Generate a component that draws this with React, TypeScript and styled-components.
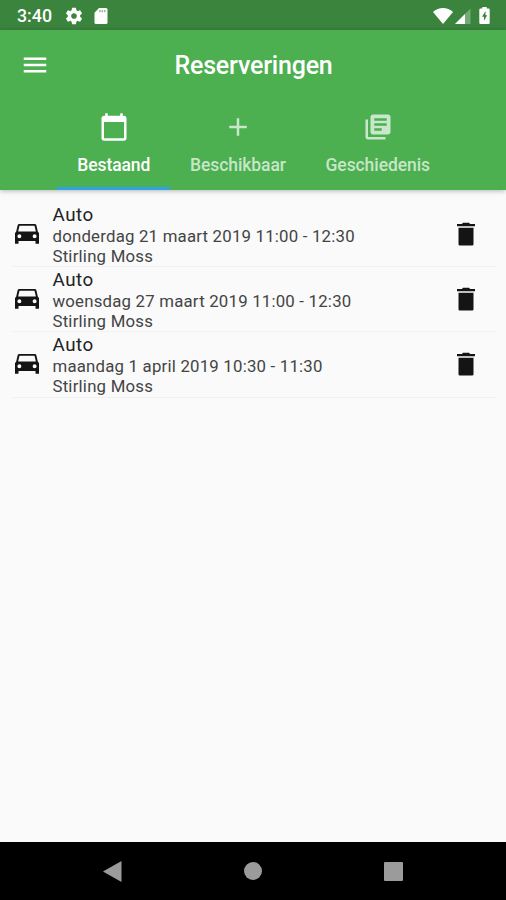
import React from "react";
import styled, { createGlobalStyle } from "styled-components";

const GlobalStyle = createGlobalStyle`
  * { box-sizing: border-box; }
  body { margin: 0; background: #fafafa; font-family: Roboto, "Liberation Sans", sans-serif; }
`;

const Screen = styled.div`
  width: 506px;
  height: 900px;
  display: flex;
  flex-direction: column;
  background: #fafafa;
  overflow: hidden;
`;

const StatusBar = styled.div`
  height: 30px;
  flex: none;
  display: flex;
  align-items: center;
  padding: 1px 16px 0 17px;
  background: #3b843e;
  color: #fff;
`;

const Clock = styled.span`
  width: 48px;
  font-size: 17.8px;
  font-weight: 500;
  line-height: 30px;
`;

const StatusGroup = styled.div<{ $gap: number; $end?: boolean }>`
  display: flex;
  align-items: center;
  gap: ${(p) => p.$gap}px;
  margin-left: ${(p) => (p.$end ? "auto" : "0")};
`;

const Header = styled.header`
  flex: none;
  height: 160px;
  background: #4caf50;
  color: #fff;
  box-shadow: 0 1px 5px rgba(0, 0, 0, 0.28);
`;

const AppBar = styled.div`
  height: 70px;
  display: grid;
  grid-template-columns: 70px 1fr 70px;
  align-items: center;
  justify-items: center;
`;

const Title = styled.h1`
  margin: 0;
  padding: 2px 0 0 1px;
  font-size: 25px;
  font-weight: 500;
  line-height: 30px;
  letter-spacing: -0.2px;
`;

const Tabs = styled.nav`
  height: 90px;
  display: flex;
  justify-content: center;
  padding-left: 1px;
`;

const Tab = styled.div<{ $width: number; $active?: boolean }>`
  width: ${(p) => p.$width}px;
  display: flex;
  flex-direction: column;
  align-items: center;
  padding-top: 12px;
  color: ${(p) => (p.$active ? "#fff" : "rgba(255, 255, 255, 0.7)")};
  border-bottom: 3px solid ${(p) => (p.$active ? "#2fa3e6" : "transparent")};
`;

const TabLabel = styled.span`
  margin-top: 13px;
  font-size: 17.5px;
  font-weight: 500;
  line-height: 21px;
  letter-spacing: -0.08px;
`;

const List = styled.main`
  flex: 1;
  padding: 12px 10px 0 12px;
`;

const Row = styled.article`
  height: 65.2px;
  display: grid;
  grid-template-columns: 40px 1fr 60px;
  align-items: center;
  border-bottom: 1px solid #f2f2f2;
  color: #141414;
`;

const RowText = styled.div`
  display: flex;
  flex-direction: column;
  white-space: nowrap;
  padding: 2px 0 0 0.5px;
`;

const Kind = styled.span`
  font-size: 18.8px;
  line-height: 22px;
  letter-spacing: 0.5px;
  color: #222;
`;

const Detail = styled.span`
  font-size: 16.8px;
  line-height: 20px;
  letter-spacing: 0.21px;
  color: #444;
`;

const RowIcon = styled.div<{ $end?: boolean }>`
  justify-self: ${(p) => (p.$end ? "end" : "start")};
  padding: ${(p) => (p.$end ? "0 15px 1px 0" : "0 0 2px 0")};
`;

const Navigation = styled.footer`
  flex: none;
  height: 58px;
  display: grid;
  grid-template-columns: repeat(3, 140.5px);
  justify-content: center;
  align-items: center;
  justify-items: center;
  background: #000;
  color: #9b9b9b;
`;

const Glyph = styled.svg`
  display: block;
  flex: none;
  fill: currentColor;
`;

type IconProps = { d: string; w?: number; h?: number; box?: string };

const Icon = ({ d, w = 30, h = 30, box = "0 0 24 24" }: IconProps) => (
  <Glyph width={w} height={h} viewBox={box} aria-hidden="true">
    <path d={d} fillRule="evenodd" />
  </Glyph>
);

const paths = {
  menu: "M3 18h18v-2H3v2zm0-5h18v-2H3v2zm0-7v2h18V6H3z",
  calendar:
    "M20 3h-1V1h-2v2H7V1H5v2H4c-1.1 0-2 .9-2 2v16c0 1.1.9 2 2 2h16c1.1 0 2-.9 2-2V5c0-1.1-.9-2-2-2zm0 18H4V8h16v13z",
  add: "M19 13h-6v6h-2v-6H5v-2h6V5h2v6h6v2z",
  books:
    "M4 6H2v14c0 1.1.9 2 2 2h14v-2H4V6zm16-4H8c-1.1 0-2 .9-2 2v12c0 1.1.9 2 2 2h12c1.1 0 2-.9 2-2V4c0-1.1-.9-2-2-2zm-1 9H9V9h10v2zm-4 4H9v-2h6v2zm4-8H9V5h10v2z",
  car: "M5.8 4.8H18.2q1 0 1.3 1L20.700 11l.9.900V20.600h-2.800V18.400H5.200v2.200H2.400V11.900l.9-.9L4.500 5.800q.3-1 1.300-1zM6 6.200L4.900 10.800h14.200L18 6.200zM5.900 12.900a1.600 1.600 0 1 0 0 3.200 1.600 1.600 0 1 0 0-3.200zM18.100 12.900a1.600 1.600 0 1 0 0 3.200 1.600 1.600 0 1 0 0-3.200z",
  trash: "M6 7h12v13.2q0 1-1 1H7q-1 0-1-1zM4.8 4h4l.7-1h5l.7 1h4v1.800H4.800z",
  gear: "M19.43 12.98c.04-.32.07-.64.07-.98s-.03-.66-.07-.98l2.11-1.65c.19-.15.24-.42.12-.64l-2-3.46c-.12-.22-.39-.3-.61-.22l-2.49 1c-.52-.4-1.08-.73-1.69-.98l-.38-2.65C14.46 2.18 14.25 2 14 2h-4c-.25 0-.46.18-.49.42l-.38 2.65c-.61.25-1.17.59-1.69.98l-2.49-1c-.23-.09-.49 0-.61.22l-2 3.46c-.13.22-.07.49.12.64l2.11 1.65c-.04.32-.07.65-.07.98s.03.66.07.98l-2.11 1.65c-.19.15-.24.42-.12.64l2 3.46c.12.22.39.3.61.22l2.49-1c.52.4 1.08.73 1.69.98l.38 2.65c.03.24.24.42.49.42h4c.25 0 .46-.18.49-.42l.38-2.65c.61-.25 1.17-.59 1.69-.98l2.49 1c.23.09.49 0 .61-.22l2-3.46c.12-.22.07-.49-.12-.64l-2.11-1.65zM12 15.5c-1.93 0-3.5-1.57-3.5-3.5s1.57-3.5 3.5-3.5 3.5 1.57 3.5 3.5-1.57 3.5-3.5 3.5z",
  wifi: "M0 4C3 1.3 6.3 0 10 0s7 1.3 10 4L10 16z",
};

const SdCard = () => (
  <Glyph width="14" height="16" viewBox="0 0 14 16">
    <path d="M5 0h7q1.5 0 1.5 1.5v13q0 1.5-1.5 1.5H2Q.5 16 .5 14.5V4.7z" />
    <path d="M5.2 2h1.5v2.2H5.2zm2.4 0h1.5v2.2H7.6zm2.4 0h1.5v2.2H10z" fill="#3b843e" fillOpacity="0.55" />
  </Glyph>
);

const Signal = () => (
  <Glyph width="16" height="16" viewBox="0 0 16 16">
    <path d="M0 16L15.5.5V16z" fillOpacity="0.3" />
    <path d="M0 16L10 6v10z" />
  </Glyph>
);

const Battery = () => (
  <Glyph width="11" height="17" viewBox="0 0 11 17">
    <path d="M3.3 0h4.4v1.6h1.8q1.2 0 1.2 1.2v13q0 1.2-1.2 1.2h-8Q.3 17 .3 15.8V2.8q0-1.2 1.2-1.2h1.8z" />
    <path d="M6.5 4L3 9.8h2v4L8.2 8.3H6.5z" fill="#3b843e" />
  </Glyph>
);

const tabs = [
  { label: "Bestaand", icon: paths.calendar, width: 113, active: true },
  { label: "Beschikbaar", icon: paths.add, width: 135.5 },
  { label: "Geschiedenis", icon: paths.books, width: 144 },
];

const reservations = [
  { kind: "Auto", when: "donderdag 21 maart 2019 11:00 - 12:30", who: "Stirling Moss" },
  { kind: "Auto", when: "woensdag 27 maart 2019 11:00 - 12:30", who: "Stirling Moss" },
  { kind: "Auto", when: "maandag 1 april 2019 10:30 - 11:30", who: "Stirling Moss" },
];

export default function App() {
  return (
    <>
      <GlobalStyle />
      <Screen>
        <StatusBar>
          <Clock>3:40</Clock>
          <StatusGroup $gap={11}>
            <Icon d={paths.gear} w={18} h={18} box="1 1 22 22" />
            <SdCard />
          </StatusGroup>
          <StatusGroup $gap={2} $end>
            <Icon d={paths.wifi} w={20} h={16} box="0 0 20 16" />
            <Signal />
          </StatusGroup>
          <StatusGroup $gap={0}>
            <Glyph width="8" height="1" />
            <Battery />
          </StatusGroup>
        </StatusBar>
        <Header>
          <AppBar>
            <Icon d={paths.menu} />
            <Title>Reserveringen</Title>
          </AppBar>
          <Tabs>
            {tabs.map((t) => (
              <Tab key={t.label} $width={t.width} $active={t.active}>
                <Icon d={t.icon} />
                <TabLabel>{t.label}</TabLabel>
              </Tab>
            ))}
          </Tabs>
        </Header>
        <List>
          {reservations.map((r) => (
            <Row key={r.when}>
              <RowIcon>
                <Icon d={paths.car} />
              </RowIcon>
              <RowText>
                <Kind>{r.kind}</Kind>
                <Detail>{r.when}</Detail>
                <Detail>{r.who}</Detail>
              </RowText>
              <RowIcon $end>
                <Icon d={paths.trash} />
              </RowIcon>
            </Row>
          ))}
        </List>
        <Navigation>
          <Icon d="M0 10.5L18.5 0v21z" w={19} h={21} box="0 0 19 21" />
          <Icon d="M9 0a9 9 0 1 0 0 18A9 9 0 1 0 9 0z" w={18} h={18} box="0 0 18 18" />
          <Icon d="M1 0h17q1 0 1 1v17q0 1-1 1H1q-1 0-1-1V1q0-1 1-1z" w={19} h={19} box="0 0 19 19" />
        </Navigation>
      </Screen>
    </>
  );
}
